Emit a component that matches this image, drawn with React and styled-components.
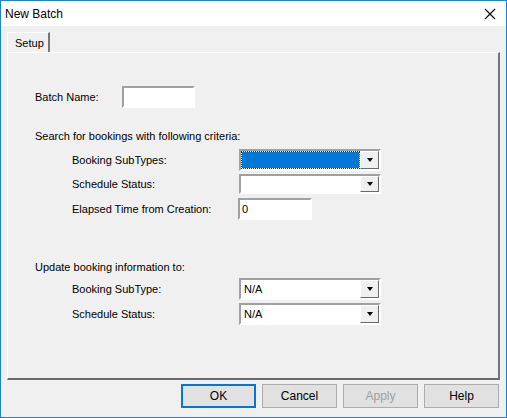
import React from "react";
import styled, { createGlobalStyle } from "styled-components";

const G = createGlobalStyle`
  html,body{margin:0;padding:0;background:#f0f0f0;}
  body{font-family:"Liberation Sans",Arial,sans-serif;font-size:11px;color:#000;}
`;
const Win = styled.div`
  width:507px;height:418px;box-sizing:border-box;border:1px solid #1883d7;background:#f0f0f0;
  display:flex;flex-direction:column;
`;
const Title = styled.div`
  height:25px;background:#fff;display:flex;align-items:center;justify-content:space-between;
  padding:0 10px 0 4px;font-size:12px;
`;
const Body = styled.div`padding:6px 6px 0 6px;display:flex;flex-direction:column;`;
const TabRow = styled.div`display:flex;height:20px;`;
const Tab = styled.div`
  width:43px;box-sizing:border-box;border:1px solid #fff;border-right:2px solid #777;border-bottom:none;
  padding:4px 0 0 7px;font-size:11px;
`;
const Panel = styled.div`
  height:328px;box-sizing:border-box;border-top:1px solid #fff;border-left:1px solid #fff;
  border-right:2px solid #777;border-bottom:2px solid #6a6a6a;
  padding:33px 0 0 27px;display:flex;flex-direction:column;
`;
const Row = styled.div`
  display:flex;align-items:center;height:${p=>p.h||22}px;margin-top:${p=>p.mt||0}px;
  padding-left:${p=>p.indent?37:0}px;
`;
const Label = styled.div`width:${p=>p.w}px;flex:none;`;
const Input = styled.div`
  width:${p=>p.w}px;height:${p=>p.h||21}px;box-sizing:border-box;background:#fff;
  border:2px solid;border-color:#a0a0a0 #fff #fff #a0a0a0;padding:3px 2px;font-size:11px;
`;
const Combo = styled.div`
  width:142px;height:${p=>p.h||22}px;box-sizing:border-box;background:#fff;display:flex;
  border:2px solid;border-color:#a0a0a0 #fff #fff #a0a0a0;
`;
const Value = styled.div`
  flex:1;margin:1px;padding:2px 2px;
  ${p=>p.sel?"background:#0078d7;outline:1px dotted #333;":""}
`;
const Arrow = styled.div`
  width:17px;background:#f0f0f0;border:1px solid;border-color:#fff #6a6a6a #6a6a6a #fff;
  display:flex;align-items:center;justify-content:center;
  &:after{content:"";border:3.5px solid transparent;border-top:4px solid #000;border-bottom:0;}
`;
const Footer = styled.div`display:flex;justify-content:flex-end;gap:6px;padding:4px 1px 0 0;`;
const Btn = styled.div`
  width:75px;height:24px;box-sizing:border-box;display:flex;align-items:center;justify-content:center;
  background:#e1e1e1;border:1px solid ${p=>p.def?"#0078d7":"#adadad"};
  box-shadow:${p=>p.def?"inset 0 0 0 1px #0078d7":"none"};font-size:12px;
  color:${p=>p.dis?"#a0a0a0":"#000"};
`;

const ComboBox=({sel,v,h})=>(<Combo h={h}><Value sel={sel}>{v}</Value><Arrow/></Combo>);

export default function App(){
  return (<><G/><Win>
    <Title><span>New Batch</span>
      <svg width="12" height="12" viewBox="0 0 12 12"><path d="M1 1L11 11M11 1L1 11" stroke="#000" strokeWidth="1.1"/></svg>
    </Title>
    <Body>
      <TabRow><Tab>Setup</Tab></TabRow>
      <Panel>
        <Row h={22}><Label w={87}>Batch Name:</Label><Input w={73} h={22}/></Row>
        <Row mt={19} h={18}>Search for bookings with following criteria:</Row>
        <Row indent mt={4} h={22}><Label w={167}>Booking SubTypes:</Label><ComboBox sel/></Row>
        <Row indent mt={3} h={20}><Label w={167}>Schedule Status:</Label><ComboBox h={20}/></Row>
        <Row indent mt={4} h={22}><Label w={166}>Elapsed Time from Creation:</Label><Input w={74} h={22}>0</Input></Row>
        <Row mt={38} h={18}>Update booking information to:</Row>
        <Row indent mt={2} h={22}><Label w={167}>Booking SubType:</Label><ComboBox v="N/A"/></Row>
        <Row indent mt={3} h={22}><Label w={167}>Schedule Status:</Label><ComboBox v="N/A"/></Row>
      </Panel>
      <Footer>
        <Btn def>OK</Btn><Btn>Cancel</Btn><Btn dis>Apply</Btn><Btn>Help</Btn>
      </Footer>
    </Body>
  </Win></>);
}
